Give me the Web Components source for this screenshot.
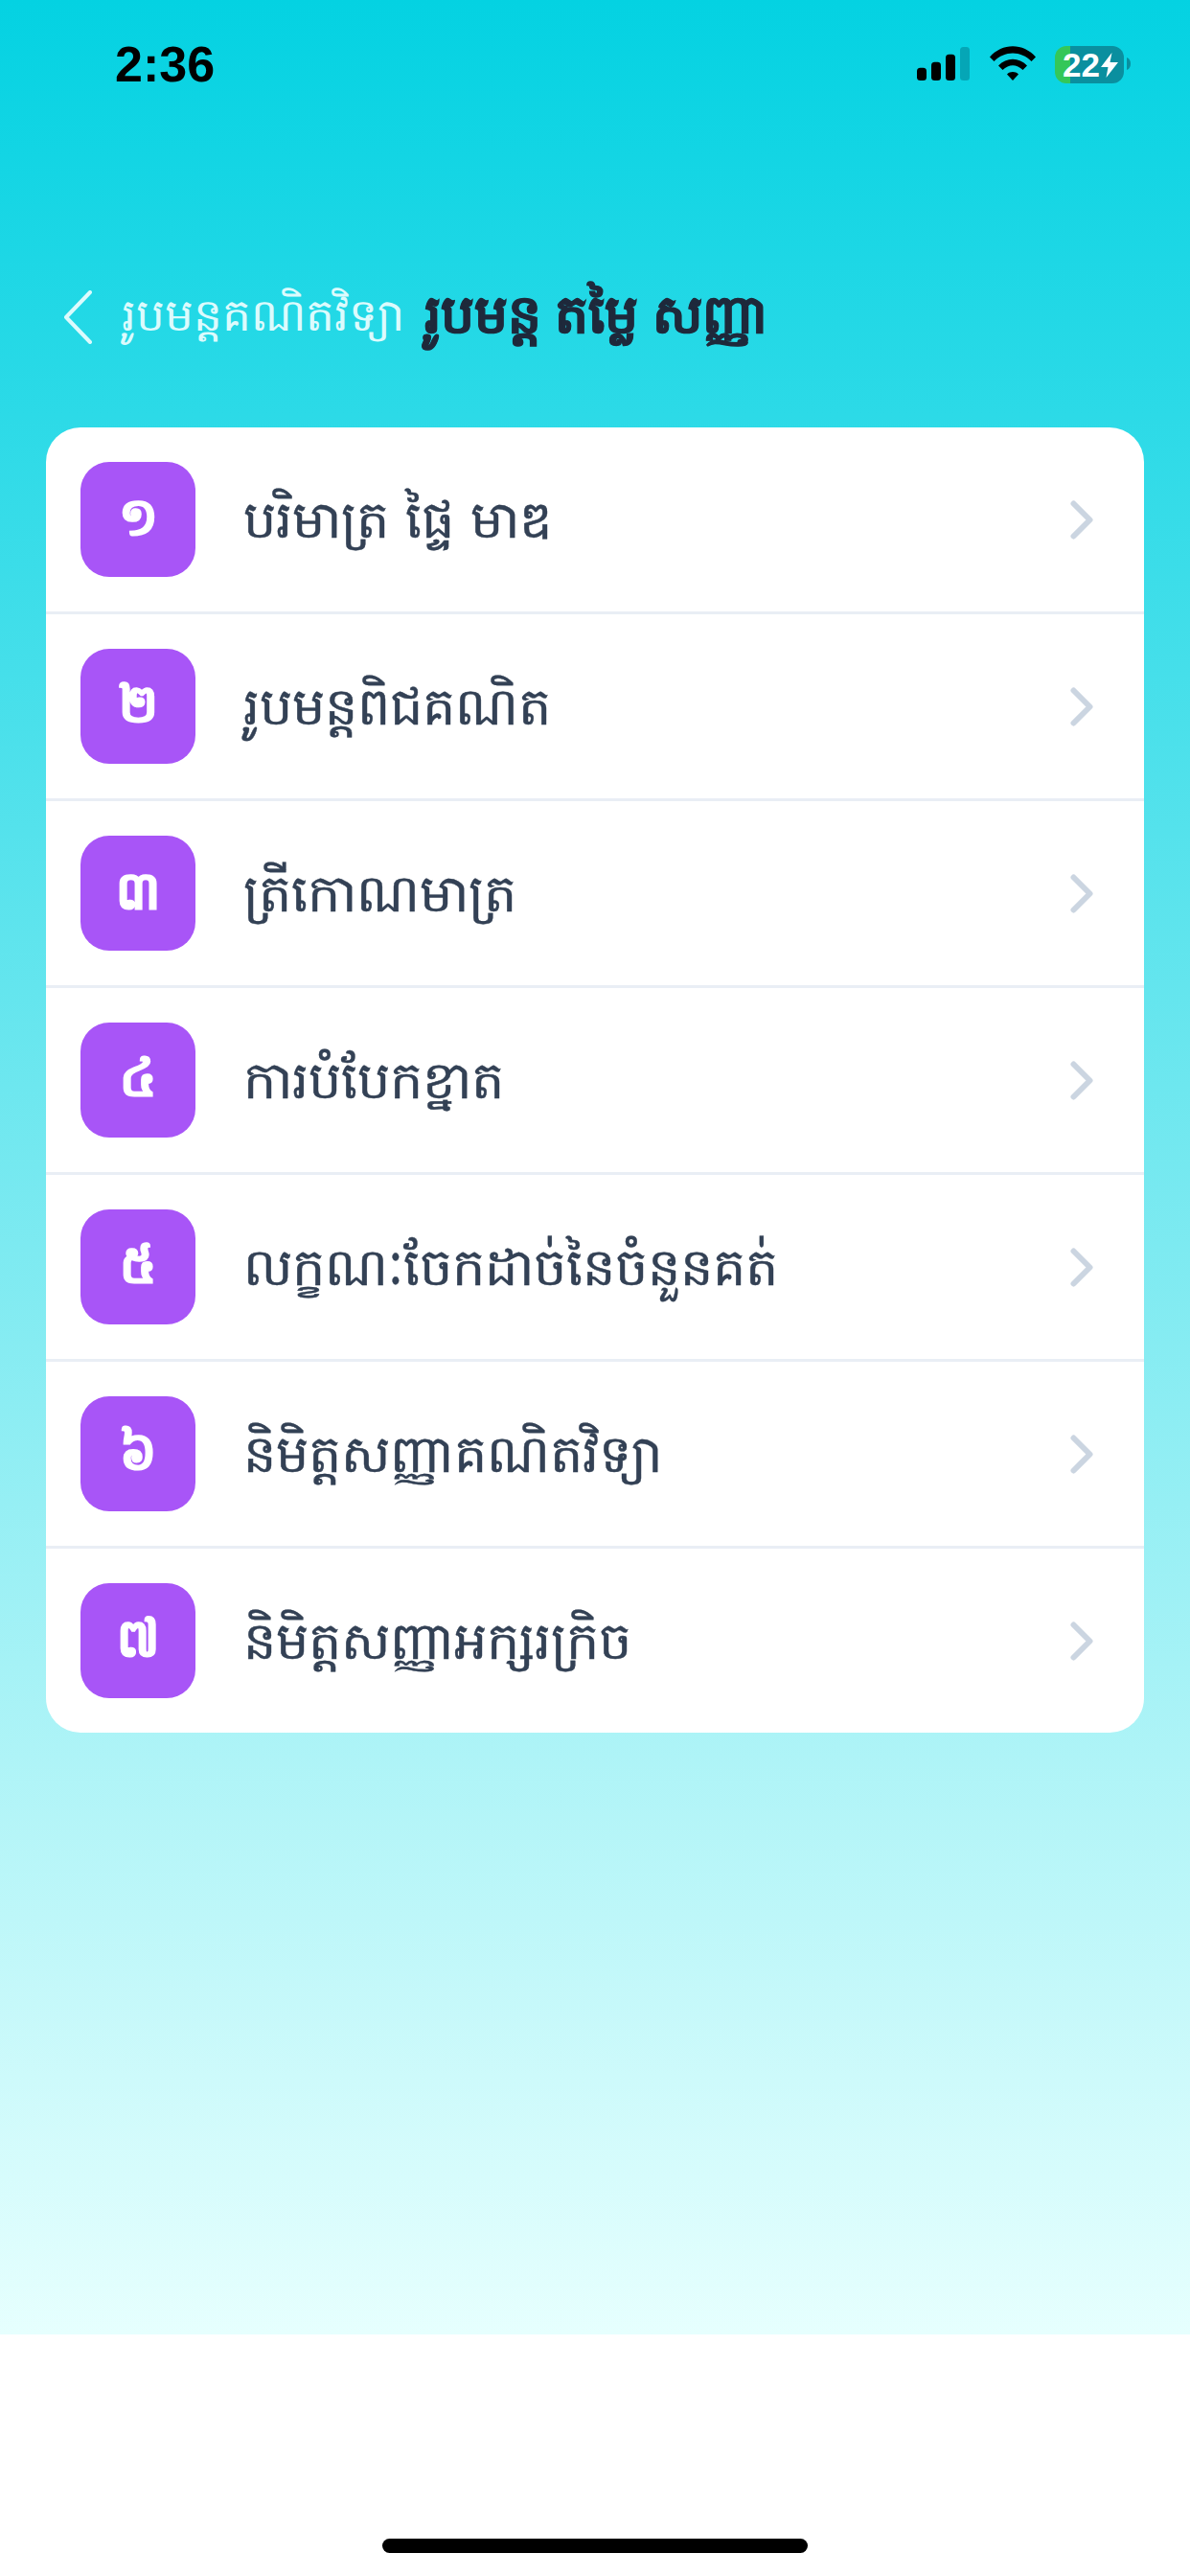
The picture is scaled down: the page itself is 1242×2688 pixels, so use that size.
<!doctype html>
<html lang="km">
<head>
<meta charset="utf-8">
<title>រូបមន្ត តម្លៃ សញ្ញា</title>
<style>
  html, body { margin: 0; background: #fff; }
</style>
</head>
<body>
<app-screen>
  <status-bar slot="top" time="2:36" battery="22"></status-bar>
  <nav-header slot="top" back="រូបមន្តគណិតវិទ្យា" title="រូបមន្ត តម្លៃ សញ្ញា"></nav-header>
  <menu-card>
    <menu-row num="១">បរិមាត្រ ផ្ទៃ មាឌ</menu-row>
    <menu-row num="២">រូបមន្តពិជគណិត</menu-row>
    <menu-row num="៣">ត្រីកោណមាត្រ</menu-row>
    <menu-row num="៤">ការបំបែកខ្នាត</menu-row>
    <menu-row num="៥">លក្ខណៈចែកដាច់នៃចំនួនគត់</menu-row>
    <menu-row num="៦">និមិត្តសញ្ញាគណិតវិទ្យា</menu-row>
    <menu-row num="៧">និមិត្តសញ្ញាអក្សរក្រិច</menu-row>
  </menu-card>
</app-screen>

<script>
const KHMER = `"Noto Sans", "Noto Sans CJK SC", sans-serif`;

class AppScreen extends HTMLElement {
  connectedCallback() {
    this.attachShadow({ mode: "open" });
    this.shadowRoot.innerHTML = `
      <style>
        :host {
          display: flex;
          flex-direction: column;
          height: 2688px;
          background: #fff;
        }
        #bg {
          height: 2436px;
          background: linear-gradient(180deg, #04d2e2 0%, #e6fffe 100%);
        }
        #content { padding: 0 48px; }
        #home {
          display: flex;
          justify-content: center;
          padding-top: 213px;
        }
        #bar {
          width: 444px;
          height: 15px;
          border-radius: 8px;
          background: #000;
        }
      </style>
      <div id="bg">
        <slot name="top"></slot>
        <div id="content"><slot></slot></div>
      </div>
      <div id="home"><div id="bar"></div></div>
    `;
  }
}

class StatusBar extends HTMLElement {
  connectedCallback() {
    this.attachShadow({ mode: "open" });
    this.shadowRoot.innerHTML = `
      <style>
        :host {
          display: flex;
          align-items: flex-start;
          justify-content: space-between;
          height: 130px;
          box-sizing: border-box;
          padding: 39px 62px 0 120px;
        }
        #time {
          font: 700 52px/56px "Liberation Sans", Arial, sans-serif;
          color: #000;
        }
        #icons {
          display: flex;
          align-items: flex-start;
          padding-top: 9px;
        }
        svg { display: block; }
        #wifi { margin-left: 20px; }
        #battery {
          display: flex;
          align-items: center;
          width: 72px;
          height: 39px;
          margin-left: 20px;
          border-radius: 12px;
          overflow: hidden;
          background: linear-gradient(90deg, #34c759 0 16px, #0a8f9f 16px);
          color: #fff;
          font: 700 35px/39px "Liberation Sans", Arial, sans-serif;
          padding-left: 8px;
          box-sizing: border-box;
        }
        #bolt { margin-left: 1px; }
        #cap { margin: 12px 0 0 3px; }
      </style>
      <div id="time">${this.getAttribute("time")}</div>
      <div id="icons">
        <svg width="56" height="37" viewBox="0 0 56 37" style="margin-top:1px">
          <rect x="0" y="21.7" width="10" height="13.3" rx="3.5" fill="#000"/>
          <rect x="15" y="15.7" width="10" height="19.3" rx="3.5" fill="#000"/>
          <rect x="30" y="7.7" width="10" height="27.3" rx="3.5" fill="#000"/>
          <rect x="45" y="0" width="10" height="35" rx="3.5" fill="#05a6b6"/>
        </svg>
        <svg id="wifi" width="48" height="37" viewBox="0 0 48 37">
          <path d="M0 11.5 C13 -3.5 35 -3.5 48 11.5 L43.5 16 C32.5 4.5 15.5 4.5 4.5 16 Z" fill="#000"/>
          <path d="M9 20.5 C17.5 11.5 30.5 11.5 39 20.5 L34.5 25 C28 18.5 20 18.5 13.5 25 Z" fill="#000"/>
          <path d="M18 29.5 C21.5 26.3 26.5 26.3 30 29.5 L24 36 Z" fill="#000"/>
        </svg>
        <div id="battery">${this.getAttribute("battery")}
          <svg id="bolt" width="18" height="26" viewBox="0 0 18 26"><path d="M11.5 0 L0 15 H7.5 L5.5 26 L18 10 H9.5 Z" fill="#fff"/></svg>
        </div>
        <svg id="cap" width="4" height="13" viewBox="0 0 4 13"><path d="M0 0 C3 1 4 4 4 6.5 C4 9 3 12 0 13 Z" fill="#0a8f9f"/></svg>
      </div>
    `;
  }
}

class NavHeader extends HTMLElement {
  connectedCallback() {
    this.attachShadow({ mode: "open" });
    this.shadowRoot.innerHTML = `
      <style>
        :host {
          display: flex;
          align-items: center;
          height: 316px;
          box-sizing: border-box;
          padding: 86px 0 0 66px;
          font-family: ${KHMER};
          white-space: nowrap;
        }
        svg { display: block; flex: none; }
        #back {
          margin-left: 31px;
          font-size: 47px;
          font-weight: 400;
          color: #dcfbfd;
        }
        #title {
          margin-left: 21px;
          font-size: 55px;
          font-weight: 700;
          color: #1e293b;
          -webkit-text-stroke: 0.8px #1e293b;
        }
      </style>
      <svg width="30" height="56" viewBox="0 0 30 56" fill="none" stroke="#dcfbfd" stroke-width="4" stroke-linecap="round" stroke-linejoin="round">
        <path d="M28 2 L3 28 L28 54"/>
      </svg>
      <span id="back">${this.getAttribute("back")}</span>
      <span id="title">${this.getAttribute("title")}</span>
    `;
  }
}

class MenuCard extends HTMLElement {
  connectedCallback() {
    this.attachShadow({ mode: "open" });
    this.shadowRoot.innerHTML = `
      <style>
        :host {
          display: block;
          background: #fff;
          border-radius: 36px;
          overflow: hidden;
        }
      </style>
      <slot></slot>
    `;
  }
}

class MenuRow extends HTMLElement {
  connectedCallback() {
    this.attachShadow({ mode: "open" });
    this.shadowRoot.innerHTML = `
      <style>
        :host {
          display: flex;
          align-items: center;
          padding: 36px;
          border-bottom: 3px solid #e9eef5;
          font-family: ${KHMER};
          white-space: nowrap;
        }
        :host(:last-child) { border-bottom: 0; }
        #num {
          display: flex;
          align-items: center;
          justify-content: center;
          flex: none;
          width: 120px;
          height: 120px;
          border-radius: 30px;
          background: #a855f7;
          color: #fff;
          font-size: 54px;
          font-weight: 700;
          -webkit-text-stroke: 1.5px #fff;
        }
        #label {
          flex: 1;
          margin-left: 50px;
          padding-top: 5px;
          font-size: 54px;
          word-spacing: 3px;
          color: #334155;
          -webkit-text-stroke: 0.4px #334155;
        }
        svg { display: block; flex: none; margin-right: 17px; }
      </style>
      <div id="num">${this.getAttribute("num")}</div>
      <div id="label"><slot></slot></div>
      <svg width="24" height="41" viewBox="0 0 24 41" fill="none" stroke="#cbd5e1" stroke-width="6" stroke-linecap="round" stroke-linejoin="round">
        <path d="M3.5 3.5 L20.5 20.5 L3.5 37.5"/>
      </svg>
    `;
  }
}

customElements.define("app-screen", AppScreen);
customElements.define("status-bar", StatusBar);
customElements.define("nav-header", NavHeader);
customElements.define("menu-card", MenuCard);
customElements.define("menu-row", MenuRow);
</script>
</body>
</html>
